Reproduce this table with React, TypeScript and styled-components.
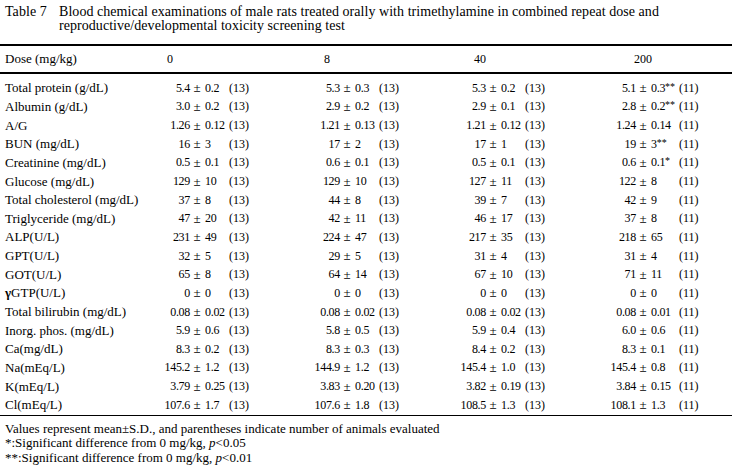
import React from "react";
import styled, { createGlobalStyle } from "styled-components";

type Cell = [string, string, string, string];
type Row = { label: string; cells: Cell[] };

const rows: Row[] = [
  { label: "Total protein (g/dL)", cells: [["5.4", "0.2", "", "13"], ["5.3", "0.3", "", "13"], ["5.3", "0.2", "", "13"], ["5.1", "0.3", "**", "11"]] },
  { label: "Albumin (g/dL)", cells: [["3.0", "0.2", "", "13"], ["2.9", "0.2", "", "13"], ["2.9", "0.1", "", "13"], ["2.8", "0.2", "**", "11"]] },
  { label: "A/G", cells: [["1.26", "0.12", "", "13"], ["1.21", "0.13", "", "13"], ["1.21", "0.12", "", "13"], ["1.24", "0.14", "", "11"]] },
  { label: "BUN (mg/dL)", cells: [["16", "3", "", "13"], ["17", "2", "", "13"], ["17", "1", "", "13"], ["19", "3", "**", "11"]] },
  { label: "Creatinine (mg/dL)", cells: [["0.5", "0.1", "", "13"], ["0.6", "0.1", "", "13"], ["0.5", "0.1", "", "13"], ["0.6", "0.1", "*", "11"]] },
  { label: "Glucose (mg/dL)", cells: [["129", "10", "", "13"], ["129", "10", "", "13"], ["127", "11", "", "13"], ["122", "8", "", "11"]] },
  { label: "Total cholesterol (mg/dL)", cells: [["37", "8", "", "13"], ["44", "8", "", "13"], ["39", "7", "", "13"], ["42", "9", "", "11"]] },
  { label: "Triglyceride (mg/dL)", cells: [["47", "20", "", "13"], ["42", "11", "", "13"], ["46", "17", "", "13"], ["37", "8", "", "11"]] },
  { label: "ALP(U/L)", cells: [["231", "49", "", "13"], ["224", "47", "", "13"], ["217", "35", "", "13"], ["218", "65", "", "11"]] },
  { label: "GPT(U/L)", cells: [["32", "5", "", "13"], ["29", "5", "", "13"], ["31", "4", "", "13"], ["31", "4", "", "11"]] },
  { label: "GOT(U/L)", cells: [["65", "8", "", "13"], ["64", "14", "", "13"], ["67", "10", "", "13"], ["71", "11", "", "11"]] },
  { label: "γGTP(U/L)", cells: [["0", "0", "", "13"], ["0", "0", "", "13"], ["0", "0", "", "13"], ["0", "0", "", "11"]] },
  { label: "Total bilirubin (mg/dL)", cells: [["0.08", "0.02", "", "13"], ["0.08", "0.02", "", "13"], ["0.08", "0.02", "", "13"], ["0.08", "0.01", "", "11"]] },
  { label: "Inorg. phos. (mg/dL)", cells: [["5.9", "0.6", "", "13"], ["5.8", "0.5", "", "13"], ["5.9", "0.4", "", "13"], ["6.0", "0.6", "", "11"]] },
  { label: "Ca(mg/dL)", cells: [["8.3", "0.2", "", "13"], ["8.3", "0.3", "", "13"], ["8.4", "0.2", "", "13"], ["8.3", "0.1", "", "11"]] },
  { label: "Na(mEq/L)", cells: [["145.2", "1.2", "", "13"], ["144.9", "1.2", "", "13"], ["145.4", "1.0", "", "13"], ["145.4", "0.8", "", "11"]] },
  { label: "K(mEq/L)", cells: [["3.79", "0.25", "", "13"], ["3.83", "0.20", "", "13"], ["3.82", "0.19", "", "13"], ["3.84", "0.15", "", "11"]] },
  { label: "Cl(mEq/L)", cells: [["107.6", "1.7", "", "13"], ["107.6", "1.8", "", "13"], ["108.5", "1.3", "", "13"], ["108.1", "1.3", "", "11"]] },
];

// header box width and sd column width per dose column
const groups = [
  { dose: "0", head: 40, sd: 25 },
  { dose: "8", head: 54, sd: 25 },
  { dose: "40", head: 68, sd: 25 },
  { dose: "200", head: 94, sd: 29 },
];

const GlobalStyle = createGlobalStyle`
  body {
    margin: 0;
    background: #ffffff;
    color: #000000;
    font-family: "Liberation Serif", "Times New Roman", serif;
  }
`;

const Page = styled.div`
  width: 732px;
  height: 465px;
  padding-top: 5px;
  box-sizing: border-box;
  overflow: hidden;
`;

const Title = styled.div`
  display: flex;
  padding-left: 5px;
  font-size: 14px;
  line-height: 13.5px;
  letter-spacing: 0.05px;
`;

const TitleNo = styled.div`
  width: 54px;
  flex: none;
`;

const TitleText = styled.div`
  flex: 1;
  padding-right: 8px;
`;

const Table = styled.div`
  margin-top: 12px;
  border-top: 2px solid #000;
  border-bottom: 1px solid #000;
  font-size: 12px;
`;

const HeadRow = styled.div`
  display: grid;
  grid-template-columns: 150px 150px 146px 150px 1fr;
  align-items: center;
  height: 26px;
  border-bottom: 2px solid #000;
`;

const HeadCell = styled.div<{ $w: number }>`
  display: flex;
  span {
    width: ${(p) => p.$w}px;
    text-align: center;
  }
`;

const Body = styled.div`
  padding-top: 5px;
`;

const Row = styled.div`
  display: grid;
  grid-template-columns: 150px 150px 146px 150px 1fr;
  align-items: center;
  height: 18.65px;
  white-space: nowrap;
`;

const Label = styled.div`
  padding-left: 5px;
  font-size: 13px;
`;

const Gamma = styled.span`
  font-weight: bold;
`;

const Value = styled.div<{ $sd: number }>`
  display: grid;
  grid-template-columns: 40px 14px ${(p) => p.$sd}px 1fr;
  align-items: center;
`;

const Mean = styled.span`
  text-align: right;
  letter-spacing: -0.3px;
`;

const Pm = styled.span`
  text-align: center;
  font-size: 13px;
`;

const Sd = styled.span`
  padding-left: 1px;
  letter-spacing: -0.3px;
`;

const Star = styled.span`
  font-size: 10px;
  position: relative;
  top: -2px;
  letter-spacing: 0;
`;

const N = styled.span``;

const Notes = styled.div`
  margin-top: 6px;
  padding-left: 5px;
  font-size: 13px;
  line-height: 14.5px;
`;

const renderLabel = (label: string) =>
  label.startsWith("γ") ? (
    <>
      <Gamma>γ</Gamma>
      {label.slice(1)}
    </>
  ) : (
    label
  );

const App = () => {
  return (
    <Page>
      <GlobalStyle />
      <Title>
        <TitleNo>Table 7</TitleNo>
        <TitleText>
          Blood chemical examinations of male rats treated orally with trimethylamine in combined repeat dose and
          reproductive/developmental toxicity screening test
        </TitleText>
      </Title>
      <Table>
        <HeadRow>
          <Label>Dose (mg/kg)</Label>
          {groups.map((g) => (
            <HeadCell key={g.dose} $w={g.head}>
              <span>{g.dose}</span>
            </HeadCell>
          ))}
        </HeadRow>
        <Body>
          {rows.map((r, i) => (
            <Row key={i}>
              <Label>{renderLabel(r.label)}</Label>
              {r.cells.map((c, j) => (
                <Value key={j} $sd={groups[j].sd}>
                  <Mean>{c[0]}</Mean>
                  <Pm>±</Pm>
                  <Sd>
                    {c[1]}
                    {c[2] && <Star>{c[2]}</Star>}
                  </Sd>
                  <N>({c[3]})</N>
                </Value>
              ))}
            </Row>
          ))}
        </Body>
      </Table>
      <Notes>
        <div>Values represent mean±S.D., and parentheses indicate number of animals evaluated</div>
        <div>
          *:Significant difference from 0 mg/kg, <i>p</i>&lt;0.05
        </div>
        <div>
          **:Significant difference from 0 mg/kg, <i>p</i>&lt;0.01
        </div>
      </Notes>
    </Page>
  );
};

export default App;
